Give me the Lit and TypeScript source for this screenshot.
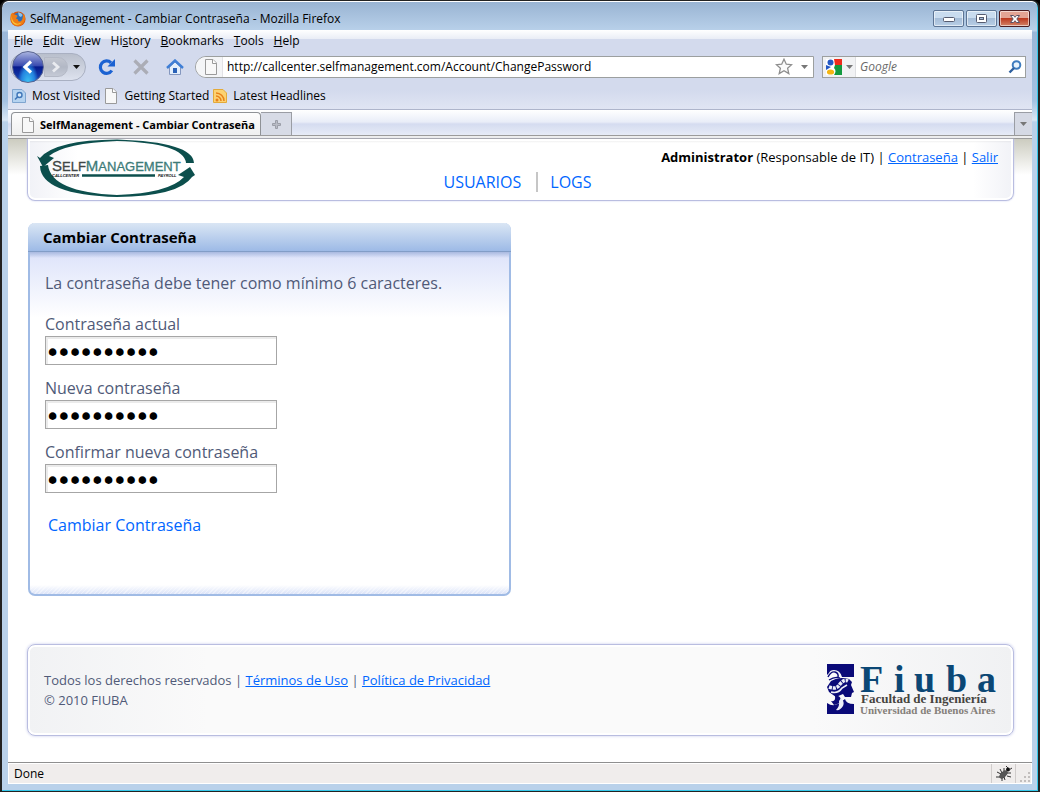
import { LitElement, html, css, svg } from "lit";
import { customElement } from "lit/decorators.js";

const pageIcon = html`<svg class="sheet" width="14" height="16" viewBox="0 0 14 16" aria-hidden="true">
  <path d="M1.5 .5H9L12.5 4V15.5H1.5Z" fill="#f8f8f8" stroke="#9a9a9a" />
  <path d="M8.5 .5V4.5H12.5" fill="#fff" stroke="#9a9a9a" />
</svg>`;

const firefoxIcon = html`<svg width="16" height="16" viewBox="0 0 16 16" aria-hidden="true">
  <circle cx="8" cy="8" r="7.6" fill="#d9560c" />
  <circle cx="8.6" cy="6.6" r="5.2" fill="#2f6fb8" />
  <path d="M8 1.6Q11 1 12.6 4L11 6 9 5Z" fill="#8cc4ea" />
  <path d="M.8 3.4L2.4 1.6 3.6 3.6Q6 3 7.6 5L6 7.4 8 8.4Q7.6 10.6 10.4 10.4 12.6 9.6 12.8 5.6L14 2.6Q16.4 8.6 13 12.8 8 17 3 13.4-.6 9.6.8 3.4Z" fill="#ee7d14" />
  <path d="M2 4Q1 9 4.6 11.8 8 13.6 11.8 11.6 9 14.6 5 13.6 0 11 2 4Z" fill="#fbc83a" />
</svg>`;

const closeGlyph = svg`<path d="M4.5 2.5H7.5L9 4.3 10.5 2.5H13.5L10.8 6 13.5 9.5H10.5L9 7.7 7.5 9.5H4.5L7.2 6Z" fill="#fff" stroke="#5b5265" />`;

@customElement("browser-chrome")
export class BrowserChrome extends LitElement {
  static styles = css`
    :host { display: block; font: 12px/16px "Open Sans", "Noto Sans", sans-serif; color: #000; }
    button { font: inherit; color: inherit; padding: 0; margin: 0; border: 0; background: none; display: flex; align-items: center; justify-content: center; }
    input { font: inherit; min-width: 0; border: 0; padding: 0; background: transparent; outline: 0; color: #000; }
    svg { display: block; flex: none; }
    .title { display: flex; align-items: center; box-sizing: border-box; height: 28px; padding: 5px 2px 0; gap: 4px; }
    .title h1 { flex: 1; margin: 0; font: inherit; }
    .controls { display: flex; gap: 2px; }
    .control { width: 31px; height: 17px; border: 1px solid #5c7494; border-radius: 2px; box-shadow: inset 0 0 0 1px #ffffff90; background: linear-gradient(#c9dcef 0 48%, #a5bdd8 50%, #b9cfe6); }
    .close { border-color: #4b1c20; background: linear-gradient(#e3a494 0 45%, #bc3a20 50%, #d28368); }
    .bars { border-bottom: 1px solid #aeb5cb; background: linear-gradient(#fff, #e9edf6 9px, #d3daed 9px, #d3daed 60px, #e0e5f3); }
    .menu { display: flex; height: 21px; gap: 10px; align-items: center; padding: 0 6px; }
    .menu u { text-underline-offset: 1px; }
    .nav { display: flex; height: 31px; align-items: center; padding: 0 6px 0 2px; }
    .travel { display: flex; align-items: center; height: 26px; width: 74px; border: 1px solid #a9b0c2; border-radius: 14px; background: linear-gradient(#b9bfcc, #dde2ee); }
    .back { width: 32px; height: 32px; margin-left: 1px; flex: none; border-radius: 50%; border: 1px solid #5a6590; background: radial-gradient(ellipse at 50% 105%, #3ec6f5 0, #2483df 32%, transparent 50%), linear-gradient(#a8b3df, #3b4bb0 45%, #071a8c 50%, #1748b8); }
    .forward { width: 25px; height: 20px; background: linear-gradient(#c2c6d0, #b2b8c5 50%, #c5cad6); border-radius: 0 10px 10px 0; border: 1px solid #b4b9c6; }
    .history { width: 17px; height: 20px; }
    .tools { display: flex; gap: 14px; margin-left: 11px; }
    .tools button { width: 20px; height: 22px; }
    .address { flex: 1; display: flex; align-items: center; height: 20px; margin-left: 10px; border: 1px solid #9c9f9f; border-radius: 11px 0 0 11px; background: #fff; overflow: hidden; }
    .identity { width: 27px; height: 20px; padding-left: 3px; background: #f4f5f7; border-right: 1px solid #e2e2e6; }
    .address input { flex: 1; margin-left: 4px; }
    .star { width: 22px; }
    .drop { width: 18px; height: 20px; }
    .search { width: 202px; height: 20px; display: flex; align-items: center; margin-left: 8px; border: 1px solid #9c9f9f; background: #fff; }
    .engine { width: 33px; height: 20px; gap: 4px; background: #f1f2f4; border-right: 1px solid #dedfe2; }
    .search input { flex: 1; margin-left: 4px; }
    .search input::placeholder { color: #6a6a6a; font-style: italic; opacity: 1; }
    .go { width: 20px; }
    .bookmarks { display: flex; height: 27px; align-items: center; gap: 4px; padding: 1px 4px 0; box-sizing: border-box; }
    .bookmarks button { gap: 6px; }
    .tabs { display: flex; align-items: flex-end; height: 25px; padding-left: 3px; background: linear-gradient(#fff, #e9edf8 12px, #d5dcf0 14px, #e6ebf7); }
    .tab { width: 250px; height: 23px; display: flex; align-items: center; gap: 5px; box-sizing: border-box; padding: 1px 2px 0 9px; border: 1px solid #8f9296; border-bottom: 0; border-radius: 4px 4px 0 0; background: linear-gradient(#fdfdfd, #efefef); font-weight: 700; white-space: nowrap; font-size: 11px; }
    .new { width: 31px; height: 23px; border: 1px solid #9a9da4; border-bottom: 0; border-left: 0; background: #d7dbe6; }
    .all { width: 18px; height: 23px; margin-left: auto; border: 1px solid #9a9da4; border-width: 1px 0 0 1px; background: #d5d9e4; }
    .edge { height: 2px; border: 1px solid #9b9b9b; border-width: 1px 0; background: #eee; }
  `;

  private menus = [["", "F", "ile"], ["", "E", "dit"], ["", "V", "iew"], ["Hi", "s", "tory"], ["", "B", "ookmarks"], ["", "T", "ools"], ["", "H", "elp"]];

  private arrow = html`<svg width="7" height="4" viewBox="0 0 7 4" aria-hidden="true"><path d="M0 0H7L3.5 4Z" fill="#777" /></svg>`;

  render() {
    return html`
      <header class="title">
        ${firefoxIcon}
        <h1>SelfManagement - Cambiar Contraseña - Mozilla Firefox</h1>
        <div class="controls">
          <button class="control" aria-label="Minimize"><svg width="12" height="6" viewBox="0 0 12 6"><rect x=".5" y="1.5" width="11" height="4" rx="1" fill="#fff" stroke="#565c70" /></svg></button>
          <button class="control" aria-label="Maximize"><svg width="11" height="9" viewBox="0 0 11 9"><rect x=".5" y=".5" width="10" height="8" rx="1" fill="#fff" stroke="#565c70" /><rect x="3.5" y="3.5" width="4" height="2" fill="#a5bdd8" stroke="#565c70" /></svg></button>
          <button class="control close" aria-label="Close"><svg width="18" height="12" viewBox="0 0 18 12">${closeGlyph}</svg></button>
        </div>
      </header>
      <div class="bars">
        <nav class="menu" aria-label="Menu">
          ${this.menus.map(([a, b, c]) => html`<button><span>${a}<u>${b}</u>${c}</span></button>`)}
        </nav>
        <div class="nav">
          <div class="travel">
            <button class="back" aria-label="Back"><svg width="16" height="16" viewBox="0 0 16 16"><path d="M11 2.5L5 8L11 13.5" fill="none" stroke="#fff" stroke-width="3.2" /></svg></button>
            <button class="forward" aria-label="Forward"><svg width="10" height="12" viewBox="0 0 10 12"><path d="M2 1.5L7 6L2 10.5" fill="none" stroke="#e9ebf0" stroke-width="2.8" /></svg></button>
            <button class="history" aria-label="Recent pages"><svg width="7" height="4" viewBox="0 0 7 4"><path d="M0 0H7L3.5 4Z" fill="#111" /></svg></button>
          </div>
          <div class="tools">
            <button aria-label="Reload"><svg width="18" height="18" viewBox="0 0 18 18"><path d="M13.8 12.5A6.2 6.2 0 1 1 13 4.8" fill="none" stroke="#1b62d2" stroke-width="3.2" /><path d="M17 1V8.5H9.5Z" fill="#1b62d2" /></svg></button>
            <button aria-label="Stop"><svg width="16" height="16" viewBox="0 0 16 16"><path d="M1.5 1.5L14.5 14.5M14.5 1.5L1.5 14.5" stroke="#abadb6" stroke-width="3.2" /></svg></button>
            <button aria-label="Home"><svg width="18" height="16" viewBox="0 0 18 16"><path d="M3.5 8V15.5H14.5V8L9 3Z" fill="#e4effb" stroke="#8497bf" /><rect x="7" y="9" width="4" height="5" fill="#2a62b8" /><path d="M1 9L9 1.5L17 9" fill="none" stroke="#3f7fd6" stroke-width="2.4" /></svg></button>
          </div>
          <div class="address">
            <button class="identity" aria-label="Site identity">${pageIcon}</button>
            <input type="text" aria-label="Address" value="http://callcenter.selfmanagement.com/Account/ChangePassword" />
            <button class="star" aria-label="Bookmark this page"><svg width="18" height="17" viewBox="0 0 18 17"><path d="M9 1.2L11.3 6.2 16.6 6.7 12.6 10.2 13.8 15.6 9 12.8 4.2 15.6 5.4 10.2 1.4 6.7 6.7 6.2Z" fill="#fafafa" stroke="#8e8e8e" stroke-width="1.3" /></svg></button>
            <button class="drop" aria-label="Show history">${this.arrow}</button>
          </div>
          <div class="search">
            <button class="engine" aria-label="Search engine">
              <svg width="16" height="16" viewBox="0 0 16 16"><rect width="16" height="16" fill="#fff" /><path d="M8 0H16V6H9Z" fill="#ee2b1c" /><path d="M9 6H16V16H8Q11 12 8 9Z" fill="#129a3f" /><circle cx="4.5" cy="3.5" r="3" fill="#2458c4" /><path d="M0 6L5 8L0 11Z" fill="#2458c4" /><ellipse cx="4.5" cy="13" rx="3.6" ry="2.6" fill="#f4b512" /></svg>
              ${this.arrow}
            </button>
            <input type="text" aria-label="Search" placeholder="Google" />
            <button class="go" aria-label="Search"><svg width="14" height="14" viewBox="0 0 14 14"><circle cx="8.5" cy="5" r="3.8" fill="#e8f3fc" stroke="#3e7cbf" stroke-width="2" /><path d="M6 8L1.5 12.5" stroke="#2d5f9e" stroke-width="2.4" /></svg></button>
          </div>
        </div>
        <div class="bookmarks">
          <button><svg width="14" height="16" viewBox="0 0 14 16"><path d="M.5 1.5H10L13.5 5V14.5H.5Z" fill="#b5d3f0" stroke="#7fa5cf" /><circle cx="7.5" cy="7" r="2.5" fill="#d9eafa" stroke="#3f76b8" stroke-width="1.4" /><path d="M5.5 9L3 11.5" stroke="#3f76b8" stroke-width="1.6" /></svg>Most Visited</button>
          <button>${pageIcon}Getting Started</button>
          <button><svg width="14" height="16" viewBox="0 0 14 16"><path d="M.5 1.5H10L13.5 5V14.5H.5Z" fill="#fcd272" stroke="#e3aa3a" /><circle cx="4" cy="12" r="1.5" fill="#e8811a" /><path d="M3 8A5 5 0 0 1 8 13M3 5A8 8 0 0 1 11 13" fill="none" stroke="#e8811a" stroke-width="1.5" /></svg>Latest Headlines</button>
        </div>
      </div>
      <div class="tabs">
        <div class="tab">${pageIcon}<span>SelfManagement - Cambiar Contraseña</span></div>
        <button class="new" aria-label="New tab"><svg width="9" height="9" viewBox="0 0 9 9"><path d="M3.5 .5H5.5V3.5H8.5V5.5H5.5V8.5H3.5V5.5H.5V3.5H3.5Z" fill="#b9bcc6" stroke="#9b9ea8" /></svg></button>
        <button class="all" aria-label="List all tabs">${this.arrow}</button>
      </div>
      <div class="edge"></div>
    `;
  }
}

@customElement("self-management-logo")
export class SelfManagementLogo extends LitElement {
  static styles = css`
    :host { display: block; }
    svg { display: block; }
    .name { font-family: "Liberation Sans", Arial, sans-serif; }
    .sub { font: italic 700 4px "Liberation Sans", Arial, sans-serif; }
  `;
  render() {
    return html`<svg width="160" height="60" viewBox="0 0 160 60" role="img" aria-label="SelfManagement">
      <path d="M3 19Q18 1 80 .5Q156 3 157 24L149 24Q147 4 80 2Q28 4 12 17L17 19L6 28L0 17Z" fill="#0c4f4d" />
      <path d="M155 38Q142 57 80 58Q4 56 3 27L11 26Q14 53 80 56Q132 54 147 38L141 36L153 28L158 36Z" fill="#0c4f4d" />
      <text class="name" x="15" y="32" font-size="15" fill="#404645" stroke="#404645" stroke-width=".3">S<tspan font-size="13">ELF</tspan><tspan fill="#3c7b78" stroke="#3c7b78">M</tspan><tspan font-size="13" fill="#3c7b78" stroke="#3c7b78">ANAGEMENT</tspan></text>
      <text class="sub" x="15" y="38" fill="#111">CALLCENTER</text>
      <text class="sub" x="121" y="38" fill="#111">PAYROLL</text>
      <path d="M45 36.5H118" stroke="#0c4f4d" stroke-width="2.5" />
    </svg>`;
  }
}

@customElement("fiuba-logo")
export class FiubaLogo extends LitElement {
  static styles = css`
    :host { display: block; }
    svg { display: block; }
    text { font-family: "Liberation Serif", "Times New Roman", serif; font-weight: 700; }
    .mark { font-size: 38px; }
    .line { font-size: 13px; }
    .small { font-size: 11px; }
  `;
  render() {
    return html`<svg width="170" height="68" viewBox="0 -8 170 68" role="img" aria-label="Fiuba">
      <path d="M0 0H27V13H15Q13 6 7 6Q3 6 2 9L0 11Z" fill="#0a0a78" />
      <path d="M1 13Q4 7 8 8Q12 9 11 14M2 16Q8 12 13 14" fill="none" stroke="#0a0a78" stroke-width="1.4" />
      <path d="M4 17Q12 12 22 15L25 18L24 21L27 28L25 29L24 33L18 33L16 30L9 33L2 28L0 23Z" fill="#0a0a78" />
      <path d="M2 23Q10 26 13 20Q17 15 21 17" fill="none" stroke="#eceef8" stroke-width="3.6" stroke-dasharray="3 .9" />
      <path d="M4 28Q11 30 15 24L20 21" fill="none" stroke="#eceef8" stroke-width="1.6" />
      <path d="M8 32Q13 31 14 36Q13 40 7 41L4 37Q9 38 8 32Z" fill="#0a0a78" />
      <path d="M0 39Q7 44 14 38L18 35Q19 40 27 40V50H0Z" fill="#0a0a78" />
      <path d="M14 34Q18 38 16 42Q13 47 9 46Q13 42 12 37Z" fill="#eceef8" />
      <text class="mark" x="33 67 87 119 150" y="28" fill="#0b4775">Fiuba</text>
      <text class="line" x="34" y="39" fill="#46443f">Facultad de Ingeniería</text>
      <text class="small" x="33" y="50" fill="#85807a">Universidad de Buenos Aires</text>
    </svg>`;
  }
}

@customElement("account-page")
export class AccountPage extends LitElement {
  static styles = css`
    :host { display: flex; flex-direction: column; font: 13px/20px "Open Sans", "Noto Sans", sans-serif; color: #505a78; background: linear-gradient(#ccccc0, #fff 36px) 0 0 / 100% 36px no-repeat #fff; padding: 0 18px 26px 19px; }
    a { color: #06f; }
    button, input { font: inherit; }
    .top { display: grid; grid-template-columns: 1fr auto 1fr; height: 61px; padding: 0 15px 0 9px; border: 1px solid #b9bde0; border-top: 0; border-radius: 0 0 8px 8px; box-shadow: 0 0 2px #c9cdee, inset 0 0 0 2px #fff; background: linear-gradient(#0000001c, transparent 4px), linear-gradient(90deg, #f1f2f7, #fff 50px calc(100% - 40px), #f1f2f7); }
    .menu { display: flex; align-items: flex-end; padding-bottom: 8px; font-size: 16px; }
    .menu a { text-decoration: none; line-height: 20px; }
    .menu a + a { margin-left: 15px; padding-left: 12px; border-left: 2px solid #c6c6c6; }
    .user { text-align: right; padding-top: 8px; color: #000; white-space: nowrap; }
    .panel { width: 483px; box-sizing: border-box; margin: 22px 1px 0; border: 2px solid #a0bbe5; border-top: 0; border-radius: 7px; background: repeating-linear-gradient(135deg, #ffffff66 0 1px, transparent 1px 3px) 0 100% / 100% 9px no-repeat, linear-gradient(#fff, #dbe3f8) 0 100% / 100% 9px no-repeat, #fff; }
    .panel h2 { margin: 0 -2px; height: 27px; padding: 1px 15px 0; border-bottom: 1px solid #829dc7; border-radius: 7px 7px 0 0; background: linear-gradient(#dae6f4, #9dbae6); color: #000; font: 700 15px/27px "Open Sans", "Noto Sans", sans-serif; }
    .body { padding: 19px 15px 48px; margin-bottom: 9px; font-size: 16px; line-height: 24px; background: linear-gradient(#a9b9e0, transparent 6px), linear-gradient(#dde3fa, #fff 66px) 0 0 / 100% 66px no-repeat; }
    .body p { margin: 0 0 18px; }
    .field { display: flex; flex-direction: column; align-items: flex-start; margin-bottom: 12px; line-height: 23px; }
    .field input { width: 232px; height: 29px; box-sizing: border-box; border: 1px solid #a6a6a6; box-shadow: inset 2px 2px 0 #ebebeb; padding: 3px 1px 0; color: #000; background: #fff; font: 19px/24px "DejaVu Sans", sans-serif; outline: 0; -webkit-text-stroke: 2px #000; }
    .submit { margin: 8px 0 0; padding: 0 3px; border: 0; background: none; color: #06f; line-height: 24px; }
    .foot { display: flex; justify-content: space-between; align-items: center; height: 90px; margin-top: auto; padding: 0 16px; border: 1px solid #b9bde0; border-radius: 8px; box-shadow: 0 0 3px #c5c9ec, inset 0 0 0 2px #fff; background: linear-gradient(90deg, #f1f2f4, #fafafa 180px calc(100% - 200px), #f0f1f3); }
  `;

  private fields = [
    ["current", "Contraseña actual"],
    ["next", "Nueva contraseña"],
    ["confirm", "Confirmar nueva contraseña"],
  ];

  render() {
    return html`
      <header class="top">
        <self-management-logo></self-management-logo>
        <nav class="menu"><a href="#usuarios">USUARIOS</a><a href="#logs">LOGS</a></nav>
        <div class="user"><b>Administrator</b> (Responsable de IT) | <a href="#clave">Contraseña</a> | <a href="#salir">Salir</a></div>
      </header>
      <section class="panel">
        <h2>Cambiar Contraseña</h2>
        <form class="body" @submit=${(e: Event) => e.preventDefault()}>
          <p>La contraseña debe tener como mínimo 6 caracteres.</p>
          ${this.fields.map(([id, label]) => html`<div class="field">
            <label for=${id}>${label}</label>
            <input id=${id} type="password" value="0123456789" />
          </div>`)}
          <button class="submit">Cambiar Contraseña</button>
        </form>
      </section>
      <footer class="foot">
        <div>Todos los derechos reservados | <a href="#terminos">Términos de Uso</a> | <a href="#privacidad">Política de Privacidad</a><br />© 2010 FIUBA</div>
        <fiuba-logo></fiuba-logo>
      </footer>
    `;
  }
}

@customElement("app-root")
export class AppRoot extends LitElement {
  static styles = css`
    :host { display: block; background: #000; }
    .window { min-height: 100vh; box-sizing: border-box; display: flex; flex-direction: column; border: 1px solid #222; border-right-width: 2px; border-left-width: 2px; border-radius: 8px 8px 0 0; padding: 1px 6px 7px; box-shadow: inset -1px -1px 0 #35c8ea, inset 0 1px 0 #fff; background: linear-gradient(#98b3d2, #b9d1ea 30px, #9ab7d8 31px, #a4c2e2 100px, #d9e7f4 119px, #b9d1ea 121px) padding-box; }
    .page { flex: 1; }
    .status { display: flex; align-items: center; height: 21px; border-top: 1px solid #8f8f8f; box-shadow: inset 0 0 0 1px #fff; background: #f0edec; font: 12px/16px "Open Sans", "Noto Sans", sans-serif; padding: 0 0 0 6px; }
    .status span { flex: 1; }
    .bug { display: flex; align-items: center; justify-content: center; height: 19px; width: 25px; padding: 0; background: none; border: 1px solid #d0cccb; border-width: 0 1px; }
  `;
  render() {
    return html`<div class="window">
      <browser-chrome></browser-chrome>
      <account-page class="page"></account-page>
      <div class="status">
        <span>Done</span>
        <button class="bug" aria-label="Firebug"><svg width="16" height="16" viewBox="0 0 16 16"><ellipse cx="7.5" cy="8.5" rx="5" ry="2.8" transform="rotate(-45 7.5 8.5)" fill="#555" /><circle cx="12" cy="3.5" r="2" fill="#111" /><path d="M4 3L6 7M8 2V5M1 6L5 8M0 11L4 11M6 15V12M9 14L8 11M11 10L15 11M11 7L15 7M12 2L10 0M13 4L16 2" stroke="#333" /></svg></button>
        <svg width="16" height="18" viewBox="0 0 16 18" aria-hidden="true"><path d="M12 7H14V9H12ZM8 11H10V13H8ZM12 11H14V13H12ZM4 15H6V17H4ZM8 15H10V17H8ZM12 15H14V17H12Z" fill="#c2bebd" /></svg>
      </div>
    </div>`;
  }
}
